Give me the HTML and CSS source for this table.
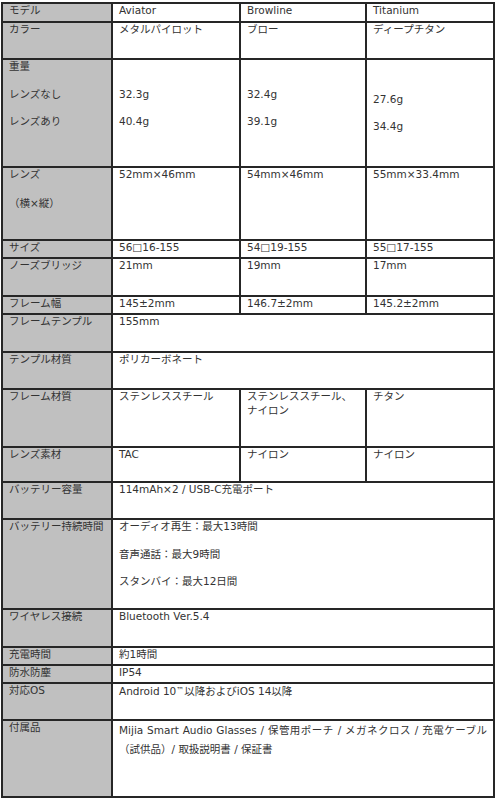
FILE: index.html
```
<!DOCTYPE html>
<html lang="ja">
<head>
<meta charset="utf-8">
<title>スペック</title>
<link rel="stylesheet" href="styles.css">
</head>
<body>
<div class="spec">
  <div class="k">モデル</div>
  <div class="v">Aviator</div>
  <div class="v">Browline</div>
  <div class="v">Titanium</div>

  <div class="k">カラー</div>
  <div class="v">メタルパイロット</div>
  <div class="v">ブロー</div>
  <div class="v">ディープチタン</div>

  <div class="k"><p>重量</p><p>レンズなし</p><p>レンズあり</p></div>
  <div class="v skip"><p>32.3g</p><p>40.4g</p></div>
  <div class="v skip"><p>32.4g</p><p>39.1g</p></div>
  <div class="v mid"><p>27.6g</p><p>34.4g</p></div>

  <div class="k"><p>レンズ</p><p class="lens2">（横×縦）</p></div>
  <div class="v">52mm×46mm</div>
  <div class="v">54mm×46mm</div>
  <div class="v">55mm×33.4mm</div>

  <div class="k">サイズ</div>
  <div class="v">56□16-155</div>
  <div class="v">54□19-155</div>
  <div class="v">55□17-155</div>

  <div class="k">ノーズブリッジ</div>
  <div class="v">21mm</div>
  <div class="v">19mm</div>
  <div class="v">17mm</div>

  <div class="k">フレーム幅</div>
  <div class="v">145±2mm</div>
  <div class="v">146.7±2mm</div>
  <div class="v">145.2±2mm</div>

  <div class="k">フレームテンプル</div>
  <div class="v all">155mm</div>

  <div class="k">テンプル材質</div>
  <div class="v all">ポリカーボネート</div>

  <div class="k">フレーム材質</div>
  <div class="v">ステンレススチール</div>
  <div class="v">ステンレススチール、<br>ナイロン</div>
  <div class="v">チタン</div>

  <div class="k">レンズ素材</div>
  <div class="v">TAC</div>
  <div class="v">ナイロン</div>
  <div class="v">ナイロン</div>

  <div class="k">バッテリー容量</div>
  <div class="v all">114mAh×2 / USB-C充電ポート</div>

  <div class="k">バッテリー持続時間</div>
  <div class="v all"><p>オーディオ再生：最大13時間</p><p>音声通話：最大9時間</p><p>スタンバイ：最大12日間</p></div>

  <div class="k">ワイヤレス接続</div>
  <div class="v all">Bluetooth Ver.5.4</div>

  <div class="k">充電時間</div>
  <div class="v all">約1時間</div>

  <div class="k">防水防塵</div>
  <div class="v all">IP54</div>

  <div class="k">対応OS</div>
  <div class="v all">Android 10<span class="tm">™</span>以降およびiOS 14以降</div>

  <div class="k">付属品</div>
  <div class="v all acc">Mijia Smart Audio Glasses / 保管用ポーチ / メガネクロス / 充電ケーブル（試供品）/ 取扱説明書 / 保証書</div>
</div>
</body>
</html>
```

FILE: styles.css
```
html, body {
  margin: 0;
  padding: 0;
  background: #ffffff;
}

.spec {
  display: grid;
  grid-template-columns: 108px 126px 124px 126px;
  grid-template-rows: 17px 35px 106px 71px 16px 36px 16px 36px 35px 56px 33px 35px 88px 36px 16px 16px 35px 75px;
  gap: 2px;
  padding: 2px;
  background: #262626;
  width: max-content;
  margin: 2px 0 0 1px;
  font-family: "DejaVu Sans", "Noto Sans CJK JP", sans-serif;
  font-size: 10.5px;
  line-height: 13.5px;
  color: #333333;
}

.k {
  background: #c0c0c0;
  padding: 0 4px 0 6px;
  white-space: nowrap;
}

.v {
  background: #ffffff;
  padding: 0 6px 0 6px;
}

.spec p {
  margin: 0;
}

.spec p + p {
  margin-top: 14px;
}

.k .lens2 {
  margin-top: 15px;
}

.skip {
  padding-top: 27.5px;
}

.mid {
  display: flex;
  flex-direction: column;
  justify-content: center;
}

.all {
  grid-column: span 3;
}

.tm {
  font-size: 8px;
  vertical-align: 2px;
}

.acc {
  line-height: 19px;
  padding-top: 0;
  text-align: justify;
}
```
